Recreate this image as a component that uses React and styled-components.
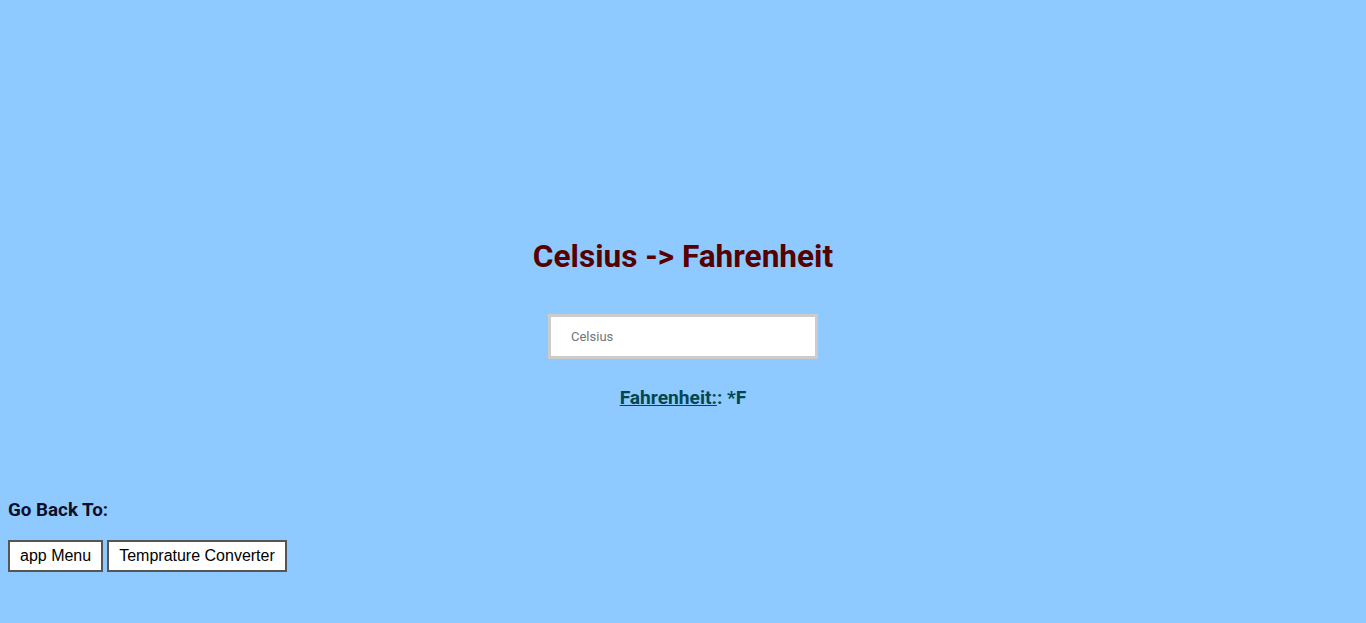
import React from "react";
import styled, { createGlobalStyle } from "styled-components";

const Global = createGlobalStyle`
  html, body { margin: 0; padding: 0; background: #8ecaff; }
  body { font-family: "Liberation Sans", Arial, sans-serif; }
`;

const Page = styled.div`
  min-height: 623px;
  display: flex;
  flex-direction: column;
  padding: 0 8px;
  box-sizing: border-box;
`;

const Converter = styled.main`
  display: flex;
  flex-direction: column;
  align-items: center;
  padding-top: 239px;
`;

const Title = styled.h1`
  margin: 0;
  font-family: Roboto, "Liberation Sans", sans-serif;
  font-weight: 700;
  font-size: 31.6px;
  line-height: 36px;
  color: #560000;
`;

const Input = styled.input`
  margin-top: 39px;
  width: 270px;
  height: 45px;
  box-sizing: border-box;
  border: 3px solid #cccccc;
  padding: 0 20px;
  font-family: Roboto, sans-serif;
  font-size: 13px;
  background: #fff;
  outline: none;
  &::placeholder { color: #757575; }
`;

const Result = styled.p`
  margin: 28px 0 0;
  font-family: Roboto, sans-serif;
  font-weight: 700;
  font-size: 19.2px;
  line-height: 22px;
  color: #02474f;
`;

const Label = styled.span`
  text-decoration: underline;
`;

const Footer = styled.nav`
  margin-top: 90px;
`;

const BackTitle = styled.h3`
  margin: 0;
  font-family: Roboto, sans-serif;
  font-weight: 700;
  font-size: 18.8px;
  line-height: 22px;
  color: #0d0d2a;
`;

const ButtonRow = styled.div`
  display: flex;
  gap: 4px;
  margin-top: 19px;
`;

const BackButton = styled.button`
  height: 32px;
  padding: 0 10px;
  background: #fff;
  border: 2px solid #555;
  font-family: "Liberation Sans", Arial, sans-serif;
  font-size: 16px;
  color: #000;
  cursor: pointer;
`;

export default function App() {
  return (
    <Page>
      <Global />
      <Converter>
        <Title>Celsius -&gt; Fahrenheit</Title>
        <Input type="text" placeholder="Celsius" />
        <Result>
          <Label>Fahrenheit:</Label>: *F
        </Result>
      </Converter>
      <Footer>
        <BackTitle>Go Back To:</BackTitle>
        <ButtonRow>
          <BackButton>app Menu</BackButton>
          <BackButton>Temprature Converter</BackButton>
        </ButtonRow>
      </Footer>
    </Page>
  );
}
